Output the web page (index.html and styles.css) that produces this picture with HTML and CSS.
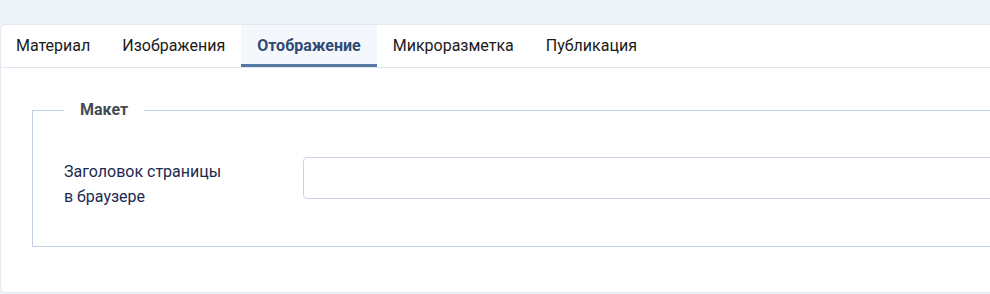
FILE: index.html
```html
<!DOCTYPE html>
<html lang="ru">
<head>
    <meta charset="UTF-8">
    <meta name="viewport" content="width=device-width, initial-scale=1.0">
    <title>Отображение</title>
    <link rel="stylesheet" href="styles.css">
</head>
<body>
    <div class="page">
        <div class="card">
            <ul class="tabs">
                <li class="tab">Материал</li>
                <li class="tab">Изображения</li>
                <li class="tab tab-active">Отображение</li>
                <li class="tab">Микроразметка</li>
                <li class="tab">Публикация</li>
            </ul>
            <div class="tab-pane">
                <fieldset class="group">
                    <legend>Макет</legend>
                    <div class="control-row">
                        <label class="control-label" for="browser-title">Заголовок страницы<br>в браузере</label>
                        <input class="control-input" type="text" id="browser-title">
                    </div>
                </fieldset>
            </div>
        </div>
    </div>
</body>
</html>
```

FILE: styles.css
```css
/**
 * Базовые настройки
 */
html, body {
    margin: 0;
    background: #eff3fa;
    overflow: hidden;
}
body {
    font-family: Roboto, "Liberation Sans", Arial, sans-serif;
    font-size: 16px;
    color: #1a1a1a;
}

.page {
    padding: 24px 0 0 0;
}

/**
 * Карточка с вкладками
 */
.card {
    width: 1200px;
    background: #fff;
    border: 1px solid #e3e8f1;
    border-radius: 5px;
    box-sizing: border-box;
    height: 269px;
}

.tabs {
    display: flex;
    margin: 0;
    padding: 0;
    list-style-type: none;
    border-bottom: 1px solid #dfe5ee;
}

.tab {
    padding: 0 16px;
    height: 39px;
    line-height: 42px;
    border-bottom: 3px solid transparent;
    cursor: pointer;
}

.tab:first-child {
    padding-left: 15px;
}

.tab-active {
    background: #f4f7fb;
    border-bottom-color: #5878a4;
    color: #2e4a75;
    font-weight: 700;
}

/**
 * Содержимое вкладки
 */
.tab-pane {
    padding: 31px 31px;
}

.group {
    margin: 0;
    padding: 36px 31px 37px;
    border: 1px solid #c5d2e5;
}

.group legend {
    padding: 0 16px;
    font-weight: 700;
    color: #454b55;
    line-height: 22px;
}

.control-row {
    display: flex;
    align-items: flex-start;
}

.control-label {
    width: 239px;
    flex: none;
    padding-top: 2px;
    line-height: 25px;
    color: #1b2a4e;
}

.control-input {
    flex: 1;
    height: 42px;
    box-sizing: border-box;
    border: 1px solid #c8d4e6;
    border-radius: 4px;
    padding: 0 12px;
    font: inherit;
}
```
